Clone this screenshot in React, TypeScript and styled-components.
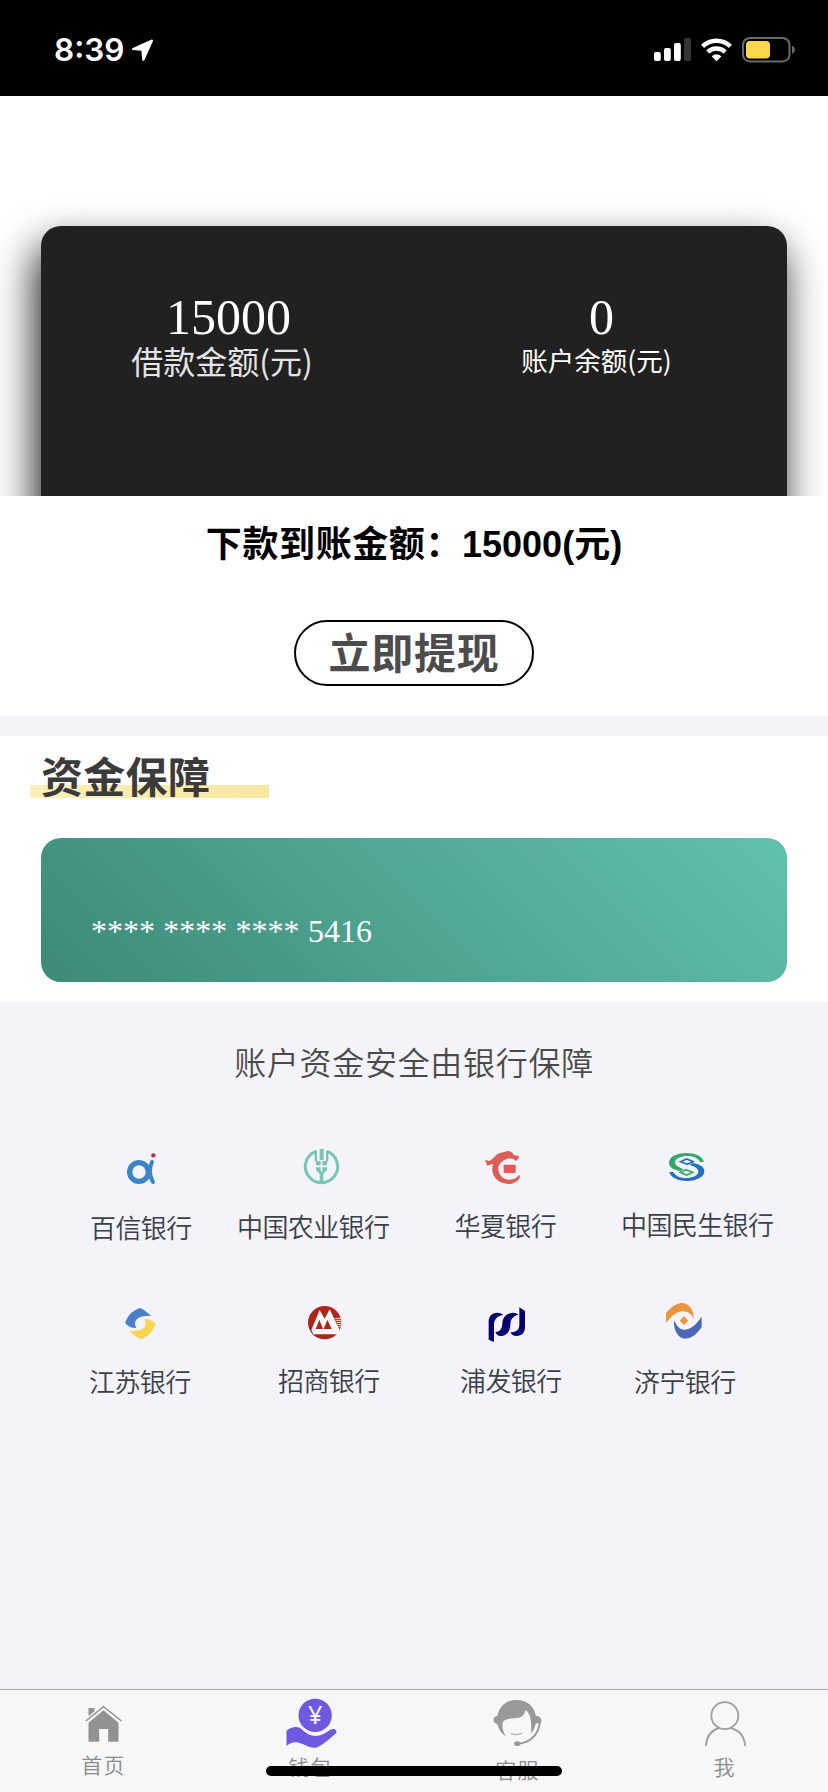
import React from "react";
import styled, { createGlobalStyle } from "styled-components";

const cjk = `"Noto Sans CJK SC", "Noto Sans", sans-serif`;

const GlobalStyle = createGlobalStyle`
  * { box-sizing: border-box; }
  body { margin: 0; background: #f3f3f9; font-family: ${cjk}; }
  svg { display: block; flex: none; }
`;

const Page = styled.div`
  position: relative;
  display: flex;
  flex-direction: column;
  width: 828px;
  height: 1792px;
  overflow: hidden;
  background: #f3f3f9;
`;

const StatusBar = styled.header`
  display: flex;
  justify-content: space-between;
  align-items: flex-start;
  height: 96px;
  padding: 30px 31px 0 54px;
  background: #000;
  color: #fff;
`;

const StatusGroup = styled.div`
  display: flex;
  align-items: center;
  height: 40px;
`;

const Clock = styled.span`
  font-family: Inter, sans-serif;
  font-weight: 600;
  font-size: 31.5px;
  line-height: 40px;
  margin-right: 6px;
`;

const Hero = styled.section`
  height: 400px;
  padding: 130px 41px 0;
  overflow: hidden;
  background: #fff;
`;

const BalanceCard = styled.div`
  display: grid;
  grid-template-columns: 1fr 1fr;
  height: 400px;
  padding-top: 66px;
  border-radius: 20px;
  background: #212121;
  box-shadow: -5px 20px 42px rgba(0, 0, 0, 0.9);
`;

const Stat = styled.div`
  display: flex;
  flex-direction: column;
  align-items: center;
`;

const StatValue = styled.div`
  margin-bottom: 1px;
  padding-left: 2px;
  font-family: "Liberation Serif", serif;
  font-size: 50px;
  line-height: 50px;
  color: #fff;
`;

const StatLabel = styled.div<{ $size: number; $shift: number; $color: string }>`
  font-size: ${(p) => p.$size}px;
  line-height: 34px;
  padding-right: ${(p) => p.$shift}px;
  color: ${(p) => p.$color};
`;

const Withdraw = styled.section`
  display: flex;
  flex-direction: column;
  align-items: center;
  height: 220px;
  padding-top: 21px;
  background: #fff;
`;

const Amount = styled.div`
  height: 49px;
  font-family: "Liberation Sans", ${cjk};
  font-size: 36px;
  font-weight: 700;
  line-height: 49px;
  color: #000;
  white-space: nowrap;
`;

const AmountText = styled.span<{ $spacing?: number }>`
  font-family: ${cjk};
  letter-spacing: ${(p) => p.$spacing ?? 0}px;
`;

const WithdrawButton = styled.button`
  width: 240px;
  height: 66px;
  margin-top: 54px;
  padding: 0 0 5px;
  border: 2px solid #000;
  border-radius: 33px;
  background: #fff;
  font-family: ${cjk};
  font-size: 42px;
  font-weight: 700;
  line-height: 56px;
  letter-spacing: 0.8px;
  color: #4c4c4c;
`;

const Guarantee = styled.section`
  height: 266px;
  margin-top: 20px;
  padding-top: 9px;
  background: #fff;
`;

const SectionTitle = styled.h2`
  width: 239px;
  margin: 0 0 33px 30px;
  padding-left: 11px;
  font-size: 42px;
  font-weight: 700;
  line-height: 60px;
  letter-spacing: 0.3px;
  color: #3b3b3b;
  background: linear-gradient(100deg, #fdefb9, #f9e6a0) no-repeat 0 40px / 100% 13px;
`;

const BankCard = styled.div`
  height: 144px;
  margin: 0 41px;
  padding: 73px 0 0 50px;
  border-radius: 20px;
  background: linear-gradient(45deg, #3d8a78, #62c0ae);
  font-family: "Liberation Serif", serif;
  font-size: 32px;
  line-height: 40px;
  word-spacing: 0.3px;
  color: #fff;
`;

const Banks = styled.section`
  flex: 1;
  padding-top: 34px;
`;

const BanksTitle = styled.h3`
  margin: 0 0 60px;
  font-size: 32px;
  font-weight: 350;
  line-height: 50px;
  letter-spacing: 0.7px;
  text-align: center;
  color: #4a4a4a;
`;

const BankRow = styled.div<{ $left: number; $columns: string }>`
  display: grid;
  grid-template-columns: ${(p) => p.$columns};
  height: 156px;
  padding-left: ${(p) => p.$left}px;
`;

const BankItem = styled.div<{ $indent: number }>`
  > svg {
    width: 40px;
    height: 40px;
    margin-left: ${(p) => p.$indent}px;
  }
`;

const BankName = styled.div<{ $gap: number }>`
  margin-top: ${(p) => p.$gap}px;
  font-size: 26px;
  font-weight: 350;
  line-height: 40px;
  letter-spacing: -0.6px;
  white-space: nowrap;
  color: #3a4049;
`;

const TabBar = styled.nav`
  display: grid;
  grid-template-columns: repeat(4, 1fr);
  height: 103px;
  border-top: 1px solid #a9a9ad;
  background: #f7f7f7;
`;

const Tab = styled.a`
  display: flex;
  flex-direction: column;
  align-items: center;
  > svg { width: 60px; height: 60px; }
`;

const TabLabel = styled.span<{ $offset: number }>`
  margin-top: ${(p) => p.$offset}px;
  font-size: 21px;
  font-weight: 350;
  line-height: 30px;
  letter-spacing: 1.2px;
  color: #8a8a8a;
`;

const HomeIndicator = styled.div`
  position: absolute;
  left: 266px;
  bottom: 16px;
  width: 296px;
  height: 10px;
  border-radius: 5px;
  background: #000;
`;

const LocationArrow = () => (
  <svg width="24" height="24" viewBox="130 38 24 24">
    <path d="M151.600 39.500L132.300 48.200Q131.200 49.600 133 50L141.400 50.700L142.200 60Q143 61.600 144.400 60.200L153 41Q153 39 151.600 39.500Z" fill="#fff" />
  </svg>
);

const StatusIcons = () => (
  <svg width="146" height="30" viewBox="650 35 146 30">
    <g fill="#fff">
      <rect x="653" y="52" width="6.8" height="9" rx="2" />
      <rect x="663" y="48" width="6.8" height="13" rx="2" />
      <rect x="673" y="43" width="6.8" height="18" rx="2" />
      <rect x="683" y="38" width="7" height="23" rx="2" fill="#353535" />
      <path d="M715.5 61.2L710.6 56.2Q715.5 52.4 720.4 56.2Z" />
    </g>
    <g fill="none" stroke="#fff" strokeWidth="4.4">
      <path d="M701.6 46.4A20 20 0 0 1 729.4 46.4" />
      <path d="M706.8 52A12.6 12.6 0 0 1 724.2 52" />
    </g>
    <rect x="742" y="38" width="46.5" height="23.4" rx="7" fill="none" stroke="#6a6a6a" strokeWidth="2" />
    <rect x="745" y="41" width="24" height="17.4" rx="4" fill="#f8d74a" />
    <path d="M791 45.5Q794 47 794 49.7T791 54Z" fill="#6a6a6a" />
  </svg>
);

const BaixinLogo = () => (
  <svg viewBox="150 48 120 120">
    <g fill="none" stroke="#3d84c6">
      <circle cx="207" cy="126" r="28" strokeWidth="16" />
      <path d="M246 96Q232 126 249 156" strokeWidth="12" strokeLinecap="round" />
    </g>
    <circle cx="250" cy="76" r="6.5" fill="#c22b3a" />
  </svg>
);

const AbcLogo = () => (
  <svg viewBox="696 48 120 120">
    <path d="M738 64A48.500 48.500 0 1 0 771 64" fill="none" stroke="#79c5b5" strokeWidth="9" />
    <g fill="#79c5b5">
      <rect x="749" y="57" width="12" height="33" />
      <path d="M734 62H741V93H752V106H738V95L734 93Z" />
      <path d="M775 62H768V93H757V106H771V95L775 93Z" />
      <path d="M738 112H752V122L759 122H757V112H771V121L760 131V158H749V131L738 121Z" />
    </g>
    <path d="M754.500 92V125" stroke="#f3f3f9" strokeWidth="3" />
  </svg>
);

const HuaxiaLogo = () => (
  <svg viewBox="156 48 120 120">
    <g fill="#dc5f57">
      <path d="M165 90L178 93C190 86 194 78 204 71C215 65 224 67 233 62C242 66 250 67 250 75L267 78C267 84 262 90 258 93C252 86 240 84 230 87C212 94 205 106 205 118C206 138 222 150 240 149C252 148 262 142 268 134C274 144 262 156 246 161C214 166 191 148 187 124C186 114 187 108 190 101L172 107Z" />
      <rect x="221" y="104" width="36" height="25" rx="2" />
    </g>
  </svg>
);

const MINSHENG_CURVE =
  "M822 96C817 77 793 69 769 69C738 69 717 82 717 98C717 113 733 120 752 123L760 117C745 112 735 106 735 97C735 86 752 78 772 78C792 78 806 86 810 96Z";

const MinshengLogo = () => (
  <svg viewBox="711 48 120 120">
    <g fill="#34a866">
      <path d={MINSHENG_CURVE} />
      <path d="M751 127L768 119L788 127L770 135Z" fill="none" stroke="#34a866" strokeWidth="5" />
    </g>
    <g fill="#2370c0" transform="rotate(180 770 111)">
      <path d={MINSHENG_CURVE} />
      <path d="M751 127L768 119L788 127L770 135Z" fill="none" stroke="#2370c0" strokeWidth="5" />
    </g>
  </svg>
);

const JIANGSU_LEAF =
  "M165 129C170 116 178 103 186 97C194 91 202 86 210 84C222 89 235 99 243 109C228 107 212 108 202 116C194 123 193 134 199 144C188 145 175 141 165 129Z";

const JiangsuLogo = () => (
  <svg viewBox="150 66 120 120">
    <path d={JIANGSU_LEAF} fill="#4a80c8" />
    <path d={JIANGSU_LEAF} fill="#f8d54c" transform="rotate(180 211 130.500)" />
  </svg>
);

const CmbLogo = () => (
  <svg viewBox="705 66 120 120">
    <circle cx="764" cy="128" r="50" fill="#ad2419" />
    <path d="M724 150L749 90L764 116L779 88L809 150L803 163H730Z" fill="#fbf6f8" />
    <path d="M737 147L748 119L759 147ZM761 147L772 119L785 147Z" fill="#ad2419" />
    <path d="M795 115H818M797 121H818M800 127H818M802 133H818M805 139H818" stroke="#f3dfe2" strokeWidth="3" />
  </svg>
);

const SpdbLogo = () => (
  <svg viewBox="171 66 120 120">
    <g fill="#07006f">
      <path d="M176 179V124C176 107 188 98 203 98C211 98 217 101 220 105C204 107 193 116 192 132V186Z" />
      <path d="M196 156C212 156 216 146 217 130C218 110 232 99 248 98C256 98 262 100 265 104C250 108 242 116 241 134C240 156 228 168 212 168C203 168 198 163 196 156Z" />
      <path d="M268 82L285 93V142C285 159 274 168 260 168C250 168 244 164 241 157C258 156 268 150 268 134Z" />
    </g>
  </svg>
);

const JiningLogo = () => (
  <svg viewBox="702 66 120 120">
    <path d="M708 129V99C720 86 736 69 755 69C778 69 792 90 791 118C788 106 777 95 759 94C738 94 722 112 708 129Z" fill="#e8963c" />
    <path d="M815 110V142C802 160 786 176 766 176C744 176 730 150 732 120C740 138 748 149 764 149C786 148 802 128 815 110Z" fill="#4c68b5" />
    <path d="M762 109L775 122L762 135L749 122Z" fill="#e8963c" />
  </svg>
);

const TAB_BOX = "220.500 60 180 180";
const TAB_BOX_WIDE = "841.500 60 180 180";

const HomeIcon = () => (
  <svg viewBox={TAB_BOX}>
    <path d="M264 215V158L309 121L354 158V215H323V177H296V215Z" fill="#929292" />
    <path d="M264 114H282V124L264 139Z" fill="#929292" />
    <path d="M256 153L309 110L363 153" fill="none" stroke="#929292" strokeWidth="4.500" />
  </svg>
);

const WalletIcon = () => (
  <svg viewBox={TAB_BOX_WIDE}>
    <circle cx="944" cy="136" r="50" fill="#7059e0" />
    <text x="944" y="163" textAnchor="middle" fontFamily="Noto Sans" fontSize="76" fill="#fff">¥</text>
    <path d="M858 182C872 171 888 168 900 175C912 184 922 197 944 198C962 197 976 188 990 179C1002 174 1011 180 1007 189C990 204 965 228 946 233C925 236 905 218 886 217C874 217 866 222 858 228Z" fill="#7059e0" />
  </svg>
);

const ServiceIcon = () => (
  <svg viewBox={TAB_BOX}>
    <path d="M249 137C254 106 278 90 306 90C336 90 358 106 364 137C378 138 382 148 380 158L363 162C360 176 356 185 350 190C351 160 350 130 333 120C330 138 318 144 300 145C280 146 268 149 264 158C262 172 266 186 274 199C260 190 252 178 249 162C233 160 233 139 249 137Z" fill="#999" />
    <path d="M376 156C373 195 345 219 310 221" fill="none" stroke="#999" strokeWidth="6" />
    <path d="M368 160Q365 178 356 190" fill="none" stroke="#f7f7f7" strokeWidth="3" />
    <ellipse cx="308" cy="221" rx="9" ry="7" fill="#999" />
    <path d="M290 191Q306 198 322 190" fill="none" stroke="#999" strokeWidth="3" />
  </svg>
);

const ProfileIcon = () => (
  <svg viewBox={TAB_BOX_WIDE}>
    <g fill="none" stroke="#a0a0a0" strokeWidth="5.500">
      <circle cx="931" cy="137" r="40.500" />
      <path d="M874 228C876 200 890 181 913 174M949 174C974 181 990 200 992 228" />
    </g>
  </svg>
);

const bankRows = [
  {
    left: 90,
    columns: "147px 217.5px 166.5px 1fr",
    items: [
      { name: "百信银行", indent: 30, gap: 21, Logo: BaixinLogo },
      { name: "中国农业银行", indent: 65, gap: 20, Logo: AbcLogo },
      { name: "华夏银行", indent: 27.5, gap: 19, Logo: HuaxiaLogo },
      { name: "中国民生银行", indent: 46, gap: 18, Logo: MinshengLogo },
    ],
  },
  {
    left: 89,
    columns: "189px 182px 174px 1fr",
    items: [
      { name: "江苏银行", indent: 31, gap: 19, Logo: JiangsuLogo },
      { name: "招商银行", indent: 27, gap: 18, Logo: CmbLogo },
      { name: "浦发银行", indent: 27, gap: 18, Logo: SpdbLogo },
      { name: "济宁银行", indent: 30, gap: 19, Logo: JiningLogo },
    ],
  },
];

const tabs = [
  { label: "首页", offset: -1, Icon: HomeIcon },
  { label: "钱包", offset: 1, Icon: WalletIcon },
  { label: "客服", offset: 4, Icon: ServiceIcon },
  { label: "我", offset: 1, Icon: ProfileIcon },
];

export default function App() {
  return (
    <Page>
      <GlobalStyle />
      <StatusBar>
        <StatusGroup>
          <Clock>8:39</Clock>
          <LocationArrow />
        </StatusGroup>
        <StatusGroup>
          <StatusIcons />
        </StatusGroup>
      </StatusBar>
      <Hero>
        <BalanceCard>
          <Stat>
            <StatValue>15000</StatValue>
            <StatLabel $size={32} $shift={11} $color="#e4e4e4">借款金额(元)</StatLabel>
          </Stat>
          <Stat>
            <StatValue>0</StatValue>
            <StatLabel $size={26.5} $shift={8} $color="#fff">账户余额(元)</StatLabel>
          </Stat>
        </BalanceCard>
      </Hero>
      <Withdraw>
        <Amount>
          <AmountText $spacing={0.6}>下款到账金额：</AmountText>15000(<AmountText>元</AmountText>)
        </Amount>
        <WithdrawButton>立即提现</WithdrawButton>
      </Withdraw>
      <Guarantee>
        <SectionTitle>资金保障</SectionTitle>
        <BankCard>**** **** **** 5416</BankCard>
      </Guarantee>
      <Banks>
        <BanksTitle>账户资金安全由银行保障</BanksTitle>
        {bankRows.map((row) => (
          <BankRow key={row.columns} $left={row.left} $columns={row.columns}>
            {row.items.map(({ name, indent, gap, Logo }) => (
              <BankItem key={name} $indent={indent}>
                <Logo />
                <BankName $gap={gap}>{name}</BankName>
              </BankItem>
            ))}
          </BankRow>
        ))}
      </Banks>
      <TabBar>
        {tabs.map(({ label, offset, Icon }) => (
          <Tab key={label}>
            <Icon />
            <TabLabel $offset={offset}>{label}</TabLabel>
          </Tab>
        ))}
      </TabBar>
      <HomeIndicator />
    </Page>
  );
}
